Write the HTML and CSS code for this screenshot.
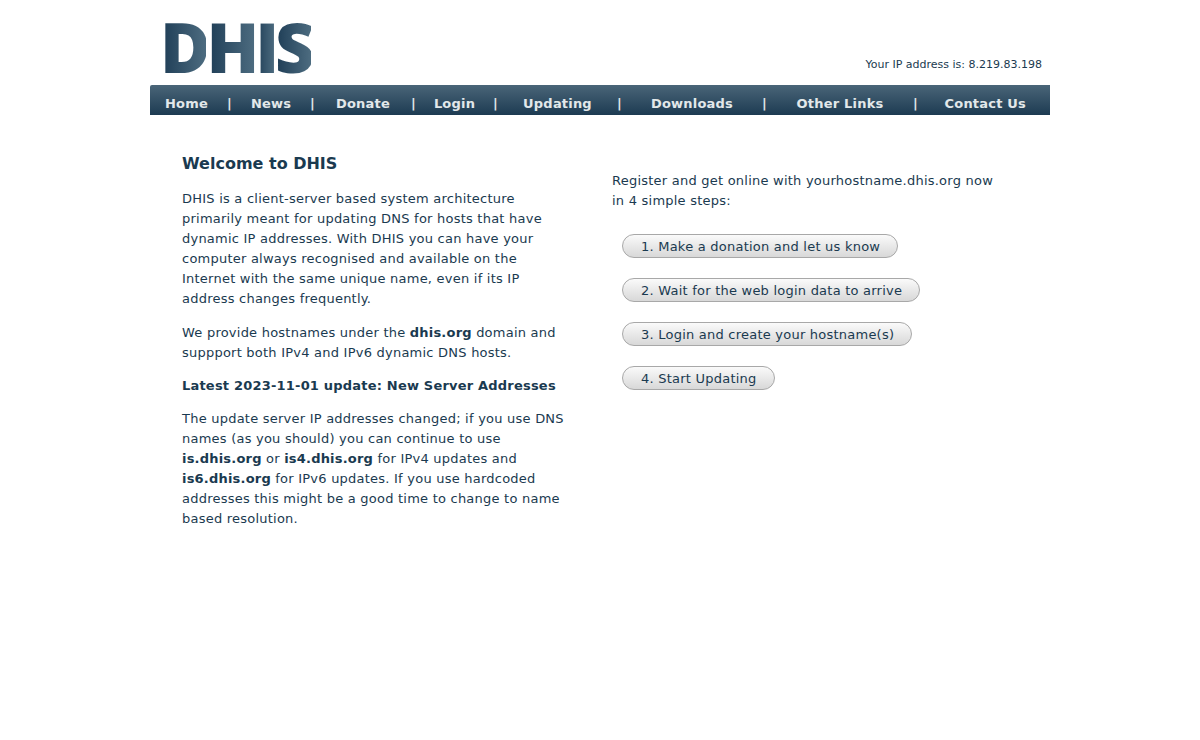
FILE: index.html
```html
<!DOCTYPE html>
<html lang="en">
<head>
<meta charset="utf-8">
<title>DHIS</title>
<link rel="stylesheet" href="styles.css">
</head>
<body>
<div class="page">
  <header class="top">
    <div class="logo"><span>D</span><span>H</span><span>I</span><span>S</span></div>
    <div class="ip">Your IP address is: 8.219.83.198</div>
  </header>
  <nav class="nav">
    <a class="first">Home</a><i>|</i><a>News</a><i>|</i><a>Donate</a><i>|</i><a>Login</a><i>|</i><a>Updating</a><i>|</i><a>Downloads</a><i>|</i><a>Other Links</a><i>|</i><a class="last">Contact Us</a>
  </nav>
  <main class="main">
    <section class="left">
      <h1>Welcome to DHIS</h1>
      <p>DHIS is a client-server based system architecture<br>primarily meant for updating DNS for hosts that have<br>dynamic IP addresses. With DHIS you can have your<br>computer always recognised and available on the<br>Internet with the same unique name, even if its IP<br>address changes frequently.</p>
      <p>We provide hostnames under the <b>dhis.org</b> domain and<br>suppport both IPv4 and IPv6 dynamic DNS hosts.</p>
      <p class="latest"><b>Latest 2023-11-01 update: New Server Addresses</b></p>
      <p>The update server IP addresses changed; if you use DNS<br>names (as you should) you can continue to use<br><b>is.dhis.org</b> or <b>is4.dhis.org</b> for IPv4 updates and<br><b>is6.dhis.org</b> for IPv6 updates. If you use hardcoded<br>addresses this might be a good time to change to name<br>based resolution.</p>
    </section>
    <section class="right">
      <p>Register and get online with yourhostname.dhis.org now<br>in 4 simple steps:</p>
      <ul class="steps">
        <li>1. Make a donation and let us know</li>
        <li>2. Wait for the web login data to arrive</li>
        <li>3. Login and create your hostname(s)</li>
        <li>4. Start Updating</li>
      </ul>
    </section>
  </main>
</div>
</body>
</html>
```
FILE: styles.css
```css
html, body { margin: 0; padding: 0; background: #fff; }
body { font-family: "DejaVu Sans", Verdana, sans-serif; font-size: 13px; line-height: 20px; letter-spacing: 0.23px; color: #1a3a50; }
b { letter-spacing: 0.2px; }
.page { width: 900px; margin: 0 auto; }
.top { height: 85px; display: flex; justify-content: space-between; align-items: flex-end; }
.logo { display: flex; margin-left: 10px; margin-bottom: 9px; font-family: "Open Sans", sans-serif; font-weight: 800; font-size: 69px; line-height: 60px; letter-spacing: -4.2px; }
.logo span { background: linear-gradient(90deg, #1d3c55, #4d6c80); -webkit-background-clip: text; background-clip: text; color: transparent; }
.ip { font-size: 11px; line-height: 14px; letter-spacing: 0; margin: 0 8px 13px 0; }
.nav { height: 30px; box-sizing: border-box; padding-top: 9px; display: grid; grid-template-columns: 78px 3px 80px 3px 98px 3px 79px 3px 121px 3px 142px 3px 148px 3px 1fr; justify-items: center; background: linear-gradient(#4a6578, #1d3b52); border-radius: 2px 0 0 0; color: #e2e8ea; font-weight: 700; font-size: 13px; line-height: 20px; letter-spacing: 0.2px; }
.nav i { font-style: normal; }
.nav .first { justify-self: start; margin-left: 15px; }
.nav .last { justify-self: end; margin-right: 24px; }
.main { display: flex; padding: 0 32px; }
.left { width: 430px; padding-top: 36px; }
.right { padding-top: 56px; }
h1 { margin: 0 0 14px; font-size: 16px; line-height: 25px; font-weight: 700; letter-spacing: 0; }
p { margin: 0 0 14px; }
.left h1 + p { margin-top: -1px; }
.latest { margin-bottom: 13px; margin-top: -1px; }
.steps { list-style: none; margin: 0; padding: 9px 0 0 10px; display: flex; flex-direction: column; align-items: flex-start; gap: 20px; }
.steps li { height: 24px; box-sizing: border-box; padding: 2px 17px 2px 18px; line-height: 20px; border: 1px solid #a8a8a8; border-radius: 12px; background: linear-gradient(#fafafa, #d8d8d8); }
```
